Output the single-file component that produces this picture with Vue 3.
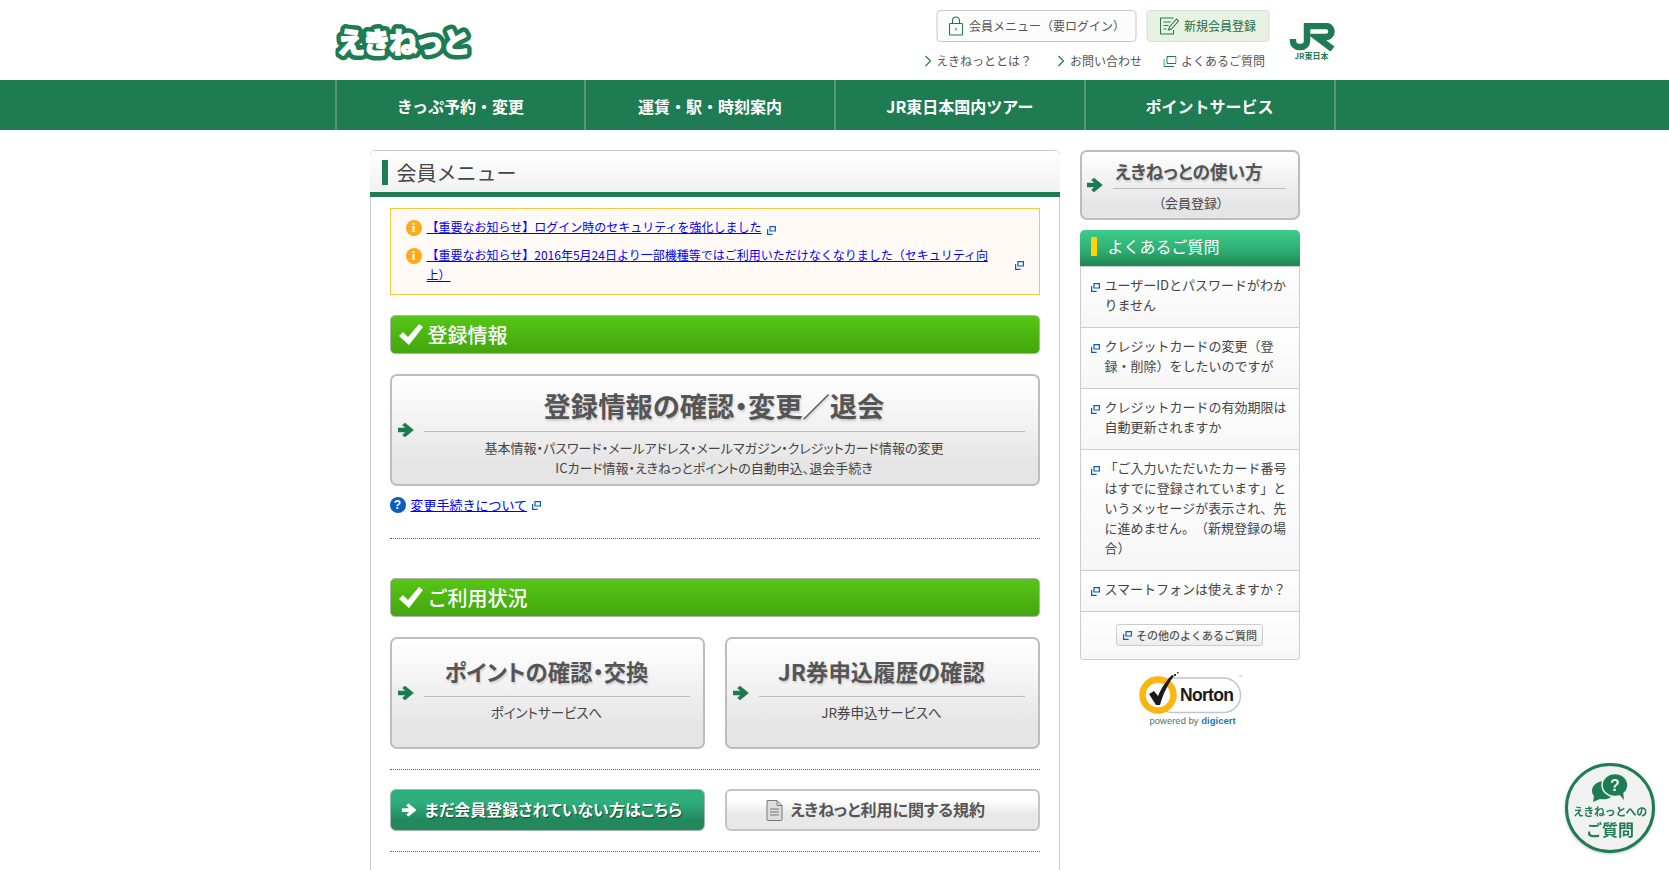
<template>
  <div class="page">
    <header class="header">
      <div class="header-inner">
        <a class="logo" href="#">
          <svg width="140" height="46" viewBox="0 0 140 46">
            <defs>
              <text id="logo-text" x="1.500" y="33" font-size="28" font-weight="700" letter-spacing="-1.500" font-family="Noto Sans CJK JP, sans-serif">えきねっと</text>
            </defs>
            <use href="#logo-text" fill="#1e7b52" stroke="#1e7b52" stroke-width="11" stroke-linejoin="round" />
            <use href="#logo-text" fill="#fff" stroke="#fff" stroke-width="2" stroke-linejoin="round" />
          </svg>
        </a>
        <div class="header-right">
          <div class="header-links">
            <div class="header-btns">
              <a class="btn-login" href="#">
                <svg width="15" height="20" viewBox="0 0 15 20" fill="none" stroke="#1e7b52" stroke-width="1.1">
                  <rect x="1" y="7.5" width="13" height="11.5" rx="0.8" />
                  <path d="M4 7.5V4.5a3.5 3.5 0 0 1 7 0v3" />
                  <path d="M7.5 12v2.5" />
                </svg>
                <span>会員メニュー（要ログイン）</span>
              </a>
              <a class="btn-register" href="#">
                <svg width="20" height="18" viewBox="0 0 20 18" fill="none" stroke="#1e7b52" stroke-width="1.1">
                  <path d="M14 1H1v16h13v-4" />
                  <path d="M4 5h7M4 8.5h5M4 12h3" />
                  <path d="M9 13l1-3 7-8 2 2-7 8z" />
                </svg>
                <span>新規会員登録</span>
              </a>
            </div>
            <ul class="sub-links">
              <li>
                <svg class="chev" width="7" height="12" viewBox="0 0 7 12" fill="none" stroke="#1e7b52" stroke-width="1.2"><path d="M1 1l5 5-5 5" /></svg>
                えきねっととは？
              </li>
              <li>
                <svg class="chev" width="7" height="12" viewBox="0 0 7 12" fill="none" stroke="#1e7b52" stroke-width="1.2"><path d="M1 1l5 5-5 5" /></svg>
                お問い合わせ
              </li>
              <li class="sub-faq">
                <svg width="13" height="11" viewBox="0 0 13 11" fill="none" stroke="#1e7b52" stroke-width="1"><path d="M3.5 .5h9v7h-9zM.5 3v7.5h10" /></svg>
                よくあるご質問
              </li>
            </ul>
          </div>
          <div class="jr-logo">
            <svg width="47" height="28" viewBox="0 0 47 28" fill="none" stroke="#1e7b52" stroke-width="6.500">
              <path d="M4.500 16v2a6 6 0 0 0 6 6h2a6 6 0 0 0 6-6V0" />
              <path d="M16 3h21.500a5.500 5.500 0 0 1 0 11H28l16 12" />
            </svg>
            <span>JR東日本</span>
          </div>
        </div>
      </div>
    </header>

    <nav class="gnav">
      <ul>
        <li v-for="item in navItems" :key="item">{{ item }}</li>
      </ul>
    </nav>

    <div class="content">
      <main class="card">
        <h2 class="card-title"><span>会員メニュー</span></h2>
        <div class="card-body">
          <div class="notice">
            <div v-for="n in notices" :key="n" class="notice-row">
              <span class="info-icon">i</span>
              <a href="#" class="notice-link">{{ n }}</a>
              <svg class="ext" viewBox="0 0 9 9" fill="none" stroke="#0a5cc0" stroke-width="1.200"><path d="M3 .6h5.400v4.400H3zM.6 3v5.400h5" /></svg>
            </div>
          </div>

          <h3 class="green-bar">
            <svg width="24" height="21" viewBox="0 0 24 21" fill="#fff"><path d="M0 12l4-4 5 5L20 0l4 3L10 21z" /></svg>
            登録情報
          </h3>

          <a href="#" class="menu-btn menu-btn-large">
            <svg class="arrow" viewBox="0 0 16 14" fill="#1c7a4e" stroke="#1c7a4e" stroke-width="0.5"><path d="M0 5h7.500L4.500 2 7 0l8.500 7L7 14l-2.500-2 3-3H0z" /></svg>
            <div class="menu-text">
              <div class="menu-title">登録情報の確認・変更／退会</div>
              <div class="menu-sub">基本情報・パスワード・メールアドレス・メールマガジン・クレジットカード情報の変更<br />ICカード情報・えきねっとポイントの自動申込、退会手続き</div>
            </div>
          </a>

          <div class="help-row">
            <span class="help-icon">?</span>
            <a href="#">変更手続きについて</a>
            <svg class="ext" viewBox="0 0 9 9" fill="none" stroke="#0a5cc0" stroke-width="1.200"><path d="M3 .6h5.400v4.400H3zM.6 3v5.400h5" /></svg>
          </div>

          <hr class="dots dots-first" />

          <h3 class="green-bar">
            <svg width="24" height="21" viewBox="0 0 24 21" fill="#fff"><path d="M0 12l4-4 5 5L20 0l4 3L10 21z" /></svg>
            ご利用状況
          </h3>

          <div class="two-col">
            <a v-for="b in usageBtns" :key="b.title" href="#" class="menu-btn menu-btn-mid">
              <svg class="arrow" viewBox="0 0 16 14" fill="#1c7a4e" stroke="#1c7a4e" stroke-width="0.5"><path d="M0 5h7.500L4.500 2 7 0l8.500 7L7 14l-2.500-2 3-3H0z" /></svg>
              <div class="menu-text">
                <div class="menu-title">{{ b.title }}</div>
                <div class="menu-sub">{{ b.sub }}</div>
              </div>
            </a>
          </div>

          <hr class="dots" />

          <div class="two-col">
            <a href="#" class="small-btn small-btn-green">
              <svg width="15" height="14" viewBox="0 0 16 14" fill="#fff"><path d="M0 5h7.500L4.500 2 7 0l8.500 7L7 14l-2.500-2 3-3H0z" /></svg>
              <span>まだ会員登録されていない方はこちら</span>
            </a>
            <a href="#" class="small-btn small-btn-grey">
              <svg width="17" height="21" viewBox="0 0 17 21" fill="#ddd" stroke="#777" stroke-width="1">
                <path d="M1 .5h10l5 5v14a1 1 0 0 1-1 1H2a1 1 0 0 1-1-1z" />
                <path d="M11 .5v5h5M4 9h9M4 12h9M4 15h9" fill="none" />
              </svg>
              <span>えきねっと利用に関する規約</span>
            </a>
          </div>

          <hr class="dots" />
        </div>
      </main>

      <aside class="side">
        <a href="#" class="menu-btn menu-btn-side">
          <svg class="arrow" viewBox="0 0 16 14" fill="#1c7a4e" stroke="#1c7a4e" stroke-width="0.5"><path d="M0 5h7.500L4.500 2 7 0l8.500 7L7 14l-2.500-2 3-3H0z" /></svg>
          <div class="menu-text">
            <div class="menu-title">えきねっとの使い方</div>
            <div class="menu-sub">（会員登録）</div>
          </div>
        </a>

        <section class="faq">
          <h3 class="faq-head"><span>よくあるご質問</span></h3>
          <a v-for="q in faqs" :key="q" href="#" class="faq-row">
            <svg class="ext" viewBox="0 0 9 9" fill="none" stroke="#0a5cc0" stroke-width="1.200"><path d="M3 .6h5.400v4.400H3zM.6 3v5.400h5" /></svg>
            <span>{{ q }}</span>
          </a>
          <div class="faq-foot">
            <a href="#" class="faq-more">
              <svg class="ext" viewBox="0 0 9 9" fill="none" stroke="#0a5cc0" stroke-width="1.200"><path d="M3 .6h5.400v4.400H3zM.6 3v5.400h5" /></svg>
              その他のよくあるご質問
            </a>
          </div>
        </section>

        <div class="norton">
          <svg width="106" height="42" viewBox="0 0 106 42">
            <rect x="18" y="6" width="85.500" height="34.500" rx="17" fill="#fff" stroke="#bcc6cd" stroke-width="1.500" />
            <circle cx="21" cy="23" r="15.500" fill="#fff" stroke="#fdb511" stroke-width="6.500" />
            <path d="M12 22l5-3 4 5C25 15 29 9 35 3l2 1C31 12 26 22 23 33h-4z" fill="#1a1a1a" />
            <path d="M37 2h2v2h-2zM40 0h1.500v1.500H40z" fill="#333" />
            <text x="43" y="29" font-family="Liberation Sans, sans-serif" font-weight="700" font-size="17.500" letter-spacing="-0.700" fill="#1a1a1a">Norton</text>
            <text x="101" y="6" font-family="Liberation Sans, sans-serif" font-size="4" fill="#999">™</text>
          </svg>
          <div class="norton-by">powered by <b>digicert</b></div>
        </div>
      </aside>
    </div>

    <a href="#" class="float-faq">
      <svg width="38" height="30" viewBox="0 0 38 30" fill="#1e7b52">
        <path d="M12 8C5 9 1 13 1 18c0 2 1 4 2 5l-1 6 7-3c6 1 12-1 14-5C17 20 12 15 12 8z" />
        <ellipse cx="24" cy="12" rx="13" ry="11.500" stroke="#f0f2f1" stroke-width="1.500" />
        <path d="M27 20l6 7-1-9z" />
        <text x="24" y="17.500" text-anchor="middle" font-family="Liberation Sans, sans-serif" font-weight="700" font-size="16" fill="#f0f2f1">?</text>
      </svg>
      <span class="float-small">えきねっとへの</span>
      <span class="float-big">ご質問</span>
    </a>
  </div>
</template>

<script setup>
const navItems = ["きっぷ予約・変更", "運賃・駅・時刻案内", "JR東日本国内ツアー", "ポイントサービス"];

const notices = [
  "【重要なお知らせ】ログイン時のセキュリティを強化しました",
  "【重要なお知らせ】2016年5月24日より一部機種等ではご利用いただけなくなりました（セキュリティ向上）",
];

const usageBtns = [
  { title: "ポイントの確認・交換", sub: "ポイントサービスへ" },
  { title: "JR券申込履歴の確認", sub: "JR券申込サービスへ" },
];

const faqs = [
  "ユーザーIDとパスワードがわか\nりません",
  "クレジットカードの変更（登\n録・削除）をしたいのですが",
  "クレジットカードの有効期限は\n自動更新されますか",
  "「ご入力いただいたカード番号\nはすでに登録されています」と\nいうメッセージが表示され、先\nに進めません。（新規登録の場\n合）",
  "スマートフォンは使えますか？",
];
</script>

<style>
html,
body {
  overflow: hidden;
  background: #fff;
}
</style>

<style scoped>
.page {
  font-family: "Noto Sans CJK JP", "Noto Sans", sans-serif;
  color: #444;
  height: 870px;
  overflow: hidden;
  text-spacing-trim: space-all;
}

a {
  text-decoration: none;
  color: inherit;
}

/* header */
.header-inner {
  width: 1000px;
  height: 80px;
  margin: 0 auto;
  display: flex;
  justify-content: space-between;
  transform: translateX(0.5px);
}

.logo {
  margin-top: 20px;
  height: 46px;
}

.logo svg {
  display: block;
}

.header-right {
  display: flex;
}

.header-links {
  padding-top: 10px;
  display: flex;
  flex-direction: column;
  align-items: flex-end;
}

.header-btns {
  display: flex;
  gap: 10px;
}

.btn-login,
.btn-register {
  height: 32px;
  box-sizing: border-box;
  display: flex;
  align-items: center;
  border-radius: 4px;
  font-size: 12px;
}

.btn-login span,
.btn-register span {
  margin-top: -2px;
}

.btn-login {
  width: 200px;
  padding-left: 11px;
  gap: 6px;
  border: 1px solid #c8c8c8;
  background: #fcfcfc;
  color: #555;
}

.btn-register {
  width: 123px;
  padding-left: 12px;
  gap: 5px;
  border: 1px solid #d4e2cf;
  background: #e8f2e2;
  color: #1e6b4a;
}

.sub-links {
  list-style: none;
  margin: 9px 4px 0 0;
  padding: 0;
  display: flex;
  gap: 26px;
  font-size: 12px;
  line-height: 20px;
  color: #555;
}

.sub-links li {
  display: flex;
  align-items: center;
  gap: 5px;
}

.sub-links .sub-faq {
  margin-left: -4px;
  gap: 4px;
}

.jr-logo {
  width: 47px;
  margin: 23px 0 0 19px;
  text-align: center;
}

.jr-logo svg {
  display: block;
}

.jr-logo span {
  display: block;
  font-size: 8px;
  line-height: 10px;
  font-weight: 700;
  color: #1e7b52;
  white-space: nowrap;
}

/* global nav */
.gnav {
  background: #1e7b52;
  height: 50px;
}

.gnav ul {
  list-style: none;
  width: 1000px;
  box-sizing: border-box;
  margin: 0 auto;
  padding: 0;
  height: 100%;
  display: flex;
  border-left: 1px solid #8db98f;
  transform: translateX(0.5px);
}

.gnav li {
  flex: 1;
  border-right: 1px solid #8db98f;
  color: #fff;
  font-size: 16px;
  font-weight: 700;
  line-height: 52px;
  text-align: center;
}

/* main layout */
.content {
  width: 930px;
  margin: 20px auto 0;
  display: flex;
  gap: 20px;
  align-items: flex-start;
}

.card {
  width: 690px;
  min-height: 900px;
  box-sizing: border-box;
  border: 1px solid #ccc;
  border-radius: 5px 5px 0 0;
}

.card-title {
  margin: 0 -1px;
  padding: 9px 0 0 12px;
  box-sizing: border-box;
  background: linear-gradient(#fff, #f1f1f1);
  border-radius: 5px 5px 0 0;
  border-bottom: 5px solid #1e7b52;
  height: 46px;
  font-size: 20px;
  font-weight: 400;
  color: #444;
}

.card-title span {
  display: block;
  height: 25px;
  line-height: 25px;
  border-left: 6px solid #1e7b52;
  padding-left: 9px;
}

.card-body {
  padding: 11px 19px 0;
}

.notice {
  height: 87px;
  box-sizing: border-box;
  padding: 8px 15px 0;
  border: 1px solid #f3c93f;
  background: #fffaf5;
  display: flex;
  flex-direction: column;
  gap: 8px;
}

.notice-row {
  display: flex;
  align-items: flex-start;
}

.notice-link {
  width: fit-content;
  max-width: 572px;
  color: #00f;
  text-decoration: underline;
  font-size: 12px;
  line-height: 20px;
  margin-left: 5px;
}

.info-icon {
  flex: none;
  width: 16px;
  height: 16px;
  margin-top: 3px;
  border-radius: 50%;
  background: #fdab1b;
  color: #fff;
  font: 700 13px/16px "Liberation Serif", serif;
  text-align: center;
}

.ext {
  flex: none;
  width: 9px;
  height: 9px;
}

.notice-row .ext {
  margin: 9px 0 0 5px;
}

.notice-row:last-child .ext {
  margin: 16px 0 0 18px;
}

.green-bar {
  margin: 20px 0;
  height: 39px;
  box-sizing: border-box;
  padding-left: 8px;
  display: flex;
  align-items: center;
  gap: 5px;
  border: 1px solid #b0b0b0;
  border-radius: 5px;
  background: linear-gradient(#56c617, #43a60d);
  color: #fff;
  font-size: 20px;
  font-weight: 500;
}

.menu-btn {
  display: flex;
  align-items: center;
  box-sizing: border-box;
  border: 2px solid #bdbdbd;
  border-radius: 7px;
  background: linear-gradient(#fff, #f6f6f6 30%, #e5e5e5 80%);
  color: #444;
  font-feature-settings: "palt";
}

.arrow {
  flex: none;
  width: 16px;
  height: 14px;
  margin: 0 10px 0 6px;
}

.menu-text {
  flex: 1;
  align-self: flex-start;
  margin-right: 13px;
  text-align: center;
}

.menu-title {
  font-weight: 700;
  color: #555;
  border-bottom: 1px solid #bbb;
  text-shadow: 1px 2px 2px rgba(0, 0, 0, 0.15);
  padding-right: 20px;
}

.menu-sub {
  font-size: 13px;
  line-height: 20px;
  color: #444;
  margin-top: 6px;
  padding-right: 20px;
}

.menu-btn-large {
  height: 112px;
}

.menu-btn-large .menu-title {
  padding-top: 14px;
  padding-bottom: 11px;
  line-height: 30px;
  font-size: 27.300px;
}

.menu-btn-mid {
  height: 112px;
}

.menu-btn-mid .menu-title {
  padding-top: 17px;
  padding-bottom: 10px;
  line-height: 30px;
  font-size: 22.400px;
}

.menu-btn-mid .menu-sub {
  margin-top: 5px;
  font-size: 13.500px;
}

.menu-btn-side {
  height: 70px;
}

.menu-btn-side .arrow {
  margin: 0 10px 0 5px;
}

.menu-btn-side .menu-text {
  margin-right: 12px;
}

.menu-btn-side .menu-title {
  padding-top: 7px;
  padding-bottom: 5px;
  line-height: 24px;
  font-size: 17.700px;
}

.menu-btn-side .menu-sub {
  margin-top: 4px;
  padding-right: 16px;
}

.help-row {
  margin-top: 10px;
  display: flex;
  align-items: center;
  height: 18px;
  font-size: 13px;
}

.help-row a {
  color: #00f;
  text-decoration: underline;
  margin: -2px 5px 0;
}

.help-icon {
  width: 16px;
  height: 16px;
  border-radius: 50%;
  background: #0a5cc0;
  color: #fff;
  font: 700 12px/16px "Liberation Sans", sans-serif;
  text-align: center;
}

.dots {
  border: 0;
  border-top: 1px dotted #666;
  margin: 20px 0 19px;
}

.dots-first {
  margin: 24px 0 39px;
}

.two-col {
  display: grid;
  grid-template-columns: 315px 315px;
  gap: 20px;
}

.small-btn {
  height: 42px;
  box-sizing: border-box;
  display: flex;
  align-items: center;
  border-radius: 6px;
  font-weight: 700;
  font-size: 16px;
  font-feature-settings: "palt";
}

.small-btn span {
  margin-top: -2px;
}

.small-btn-green {
  padding-left: 11px;
  gap: 8px;
  border: 1px solid #9fb8a9;
  background: linear-gradient(#2fae7c, #2fae7c 30%, #23895d 75%);
  color: #fff;
  text-shadow: 1px 1px 1px rgba(0, 0, 0, 0.5);
}

.small-btn-grey {
  padding-left: 39px;
  gap: 8px;
  border: 2px solid #c4c4c4;
  background: linear-gradient(#fff, #fff 25%, #e8e8e8 60%);
  color: #555;
}

/* sidebar */
.side {
  width: 220px;
}

.faq {
  margin-top: 10px;
  border: 1px solid #ccc;
  border-top: 0;
  border-radius: 5px 5px 4px 4px;
}

.faq-head {
  margin: 0 -1px;
  height: 37px;
  box-sizing: border-box;
  padding: 7px 0 0 11px;
  border-radius: 5px 5px 0 0;
  border-bottom: 1px solid #ccc;
  background: linear-gradient(#3dcc8b, #2eab72 60%, #1f8553);
  color: #fff;
  font-size: 16px;
  font-weight: 400;
}

.faq-head span {
  display: block;
  height: 19px;
  line-height: 19px;
  border-left: 6px solid #ffd400;
  padding-left: 11px;
}

.faq-row {
  display: flex;
  align-items: flex-start;
  padding: 8px 0 12px 10px;
  border-bottom: 1px solid #ccc;
  background: linear-gradient(#fff, #f6f6f6);
  font-size: 13px;
  line-height: 20px;
  color: #444;
}

.faq-row span {
  white-space: pre-line;
  margin-left: 5px;
}

.faq-row .ext {
  margin-top: 8px;
}

.faq-foot {
  height: 47px;
  padding-top: 12px;
  box-sizing: border-box;
  display: flex;
  justify-content: center;
  background: linear-gradient(#fff, #f7f7f7);
  border-radius: 0 0 4px 4px;
}

.faq-more {
  display: flex;
  align-items: center;
  gap: 4px;
  width: 147px;
  height: 22px;
  box-sizing: border-box;
  padding-left: 6px;
  border: 1px solid #ccc;
  border-radius: 3px;
  background: linear-gradient(#fff, #ececec);
  font-size: 11px;
  font-weight: 500;
  color: #555;
  white-space: nowrap;
}

.norton {
  margin: 12px 0 0 57px;
}

.norton svg {
  display: block;
}

.norton-by {
  margin: 0 0 0 13px;
  font: 9.500px/14px "Liberation Sans", sans-serif;
  color: #666;
}

.norton-by b {
  color: #1976b8;
}

/* floating button */
.float-faq {
  position: fixed;
  right: 14px;
  bottom: 17px;
  width: 90px;
  height: 90px;
  box-sizing: border-box;
  border: 3px solid #1e7b52;
  border-radius: 50%;
  background: #f0f2f1;
  box-shadow: 0 1px 3px rgba(0, 0, 0, 0.25);
  display: flex;
  flex-direction: column;
  align-items: center;
  padding-top: 7px;
  color: #1e7b52;
  font-weight: 700;
}

.float-small {
  font-size: 11px;
  line-height: 14px;
  margin-top: 1px;
  letter-spacing: -0.3px;
}

.float-big {
  font-size: 16px;
  line-height: 20px;
  margin-top: 1px;
}
</style>
